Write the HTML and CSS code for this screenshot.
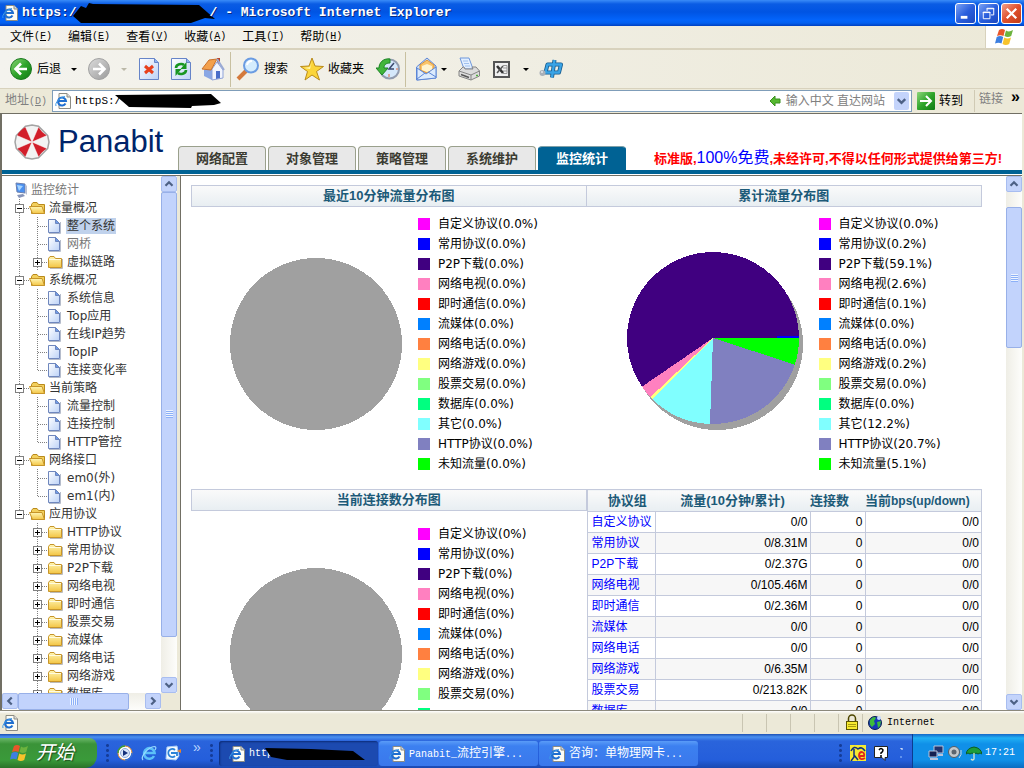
FILE: index.html
```html
<!DOCTYPE html>
<html lang="zh-CN">
<head>
<meta charset="utf-8">
<title>Panabit 监控统计</title>
<link rel="stylesheet" href="styles.css">
</head>
<body>
<svg class="defs" aria-hidden="true">
  <defs>
    <linearGradient id="gGreen" x1="0" y1="0" x2="1" y2="1"><stop offset="0" stop-color="#8fd67a"/><stop offset=".5" stop-color="#2fa52b"/><stop offset="1" stop-color="#0f7a14"/></linearGradient>
    <linearGradient id="gGray" x1="0" y1="0" x2="1" y2="1"><stop offset="0" stop-color="#dcdcdc"/><stop offset="1" stop-color="#9a9a9a"/></linearGradient>
    <linearGradient id="gPage" x1="0" y1="0" x2="1" y2="1"><stop offset="0" stop-color="#fff"/><stop offset="1" stop-color="#bcd2f7"/></linearGradient>
    <linearGradient id="gFolder" x1="0" y1="0" x2="0" y2="1"><stop offset="0" stop-color="#fff6b4"/><stop offset="1" stop-color="#f3c544"/></linearGradient>
    <symbol id="ie" viewBox="0 0 16 16"><path d="M4 .5h8l3.500 3.500v11.500H4z" fill="#fdfdf6" stroke="#8c8c84"/><path d="M12 .5V4h3.500" fill="#ddd" stroke="#8c8c84"/><path d="M10.500 10.500a4 4 0 1 1 .5-2.500H4" fill="none" stroke="#1f6fd0" stroke-width="2"/><path d="M1 13C-.5 10 5 4 10 3.500" fill="none" stroke="#3f9be8"/></symbol>
    <symbol id="bigE" viewBox="0 0 16 16"><path d="M13 11a5.300 5.300 0 1 1 .6-3H4" fill="none" stroke="#5cc0f8" stroke-width="2.600"/><path d="M2 15C-1 12 7 2 13.500 1.500c2 0 1.500 2 .5 3.500" fill="none" stroke="#9adcff" stroke-width="1.200"/></symbol>
    <symbol id="flag" viewBox="0 0 20 18"><path d="M4 2q3-2 6 0L8.500 8q-3-1.500-6.500 0z" fill="#e8562a"/><path d="M11 2.500q3 2 7-.5l-1.800 6q-3.500 2-6.700 0z" fill="#6cb33e"/><path d="M1.700 9q3.500-2 6.500 0l-1.700 6.500Q3.500 14 0 15.500z" fill="#3d7fe0"/><path d="M9.200 9.500q3.300 2 6.800 0L14.200 16q-3.500 2-6.700 0z" fill="#f7c32b"/></symbol>
    <symbol id="caret" viewBox="0 0 10 10"><path d="M2 4h6L5 7z"/></symbol>
    <symbol id="up" viewBox="0 0 16 16"><path d="M4 10l4-4 4 4" fill="none" stroke="#4d6185" stroke-width="2.500"/></symbol>
    <symbol id="down" viewBox="0 0 16 16"><path d="M4 6l4 4 4-4" fill="none" stroke="#4d6185" stroke-width="2.500"/></symbol>
    <symbol id="left" viewBox="0 0 16 16"><path d="M10 4L6 8l4 4" fill="none" stroke="#4d6185" stroke-width="2.500"/></symbol>
    <symbol id="right" viewBox="0 0 16 16"><path d="M6 4l4 4-4 4" fill="none" stroke="#4d6185" stroke-width="2.500"/></symbol>
    <symbol id="plus" viewBox="0 0 18 18"><path d="M8.500 0v18M9 9.500h9" stroke="#808080" stroke-dasharray="1 1"/><rect x="4.500" y="5.500" width="8" height="8" fill="#fff" stroke="#808080"/><path d="M6 9.500h5M8.500 7v5" stroke="#000"/></symbol>
    <symbol id="minus" viewBox="0 0 18 18"><path d="M8.500 0v18M9 9.500h9" stroke="#808080" stroke-dasharray="1 1"/><rect x="4.500" y="5.500" width="8" height="8" fill="#fff" stroke="#808080"/><path d="M6 9.500h5" stroke="#000"/></symbol>
    <symbol id="minusEnd" viewBox="0 0 18 18"><path d="M8.500 0v6M9 9.500h9" stroke="#808080" stroke-dasharray="1 1"/><rect x="4.500" y="5.500" width="8" height="8" fill="#fff" stroke="#808080"/><path d="M6 9.500h5" stroke="#000"/></symbol>
    <symbol id="line" viewBox="0 0 18 18"><path d="M8.500 0v18" stroke="#808080" stroke-dasharray="1 1"/></symbol>
    <symbol id="folder" viewBox="0 0 18 18"><path d="M3 15.500h12.500V6" fill="none" stroke="#bbb"/><path d="M1.500 14.500v-9l1.500-2h4l1.500 2h6v9z" fill="url(#gFolder)" stroke="#c7952a"/><path d="M2 6.500h12" stroke="#fffbe0"/></symbol>
    <symbol id="open" viewBox="0 0 18 18"><path d="M2.500 14.500v-9l1.500-2h4l1.500 2h6v9z" fill="#f2cf5c" stroke="#b98a1c"/><path d="M.5 7.500h12.500l2.500 7H3.500z" fill="url(#gFolder)" stroke="#c7952a"/></symbol>
    <symbol id="page" viewBox="0 0 18 18"><path d="M2 16.500h11.500V5" fill="none" stroke="#b5bccb"/><path d="M1.500 2.500h7l4 4v9h-11z" fill="url(#gPage)" stroke="#6f87bd"/><path d="M8.500 2.500v4h4z" fill="#6f9be8" stroke="#6f87bd"/></symbol>
    <symbol id="leaf" viewBox="0 0 54 18"><path d="M8.500 0v18M26.500 0v18M27 9.500h9" stroke="#808080" stroke-dasharray="1 1"/><use href="#page" x="36" width="18" height="18"/></symbol>
    <symbol id="leafEnd" viewBox="0 0 54 18"><path d="M8.500 0v18M26.500 0v9M27 9.500h9" stroke="#808080" stroke-dasharray="1 1"/><use href="#page" x="36" width="18" height="18"/></symbol>
    <symbol id="gray" viewBox="0 0 180 180"><circle cx="90" cy="92" r="86" fill="#a0a0a0"/></symbol>
  </defs>
</svg>

<header class="titlebar">
  <svg class="i16"><use href="#ie"/></svg>
  <h1>https:/<svg class="redact-title" viewBox="0 0 143 20"><path d="M0 13L8 3l5 2 3-5 4 1 106 1 16 14-10-1-14 5H8z"/></svg>/ - Microsoft Internet Explorer</h1>
  <div class="winbtns">
    <button aria-label="最小化"><svg viewBox="0 0 20 20"><path d="M5 14h7" stroke="#fff" stroke-width="3"/></svg></button>
    <button aria-label="还原"><svg viewBox="0 0 20 20" fill="none" stroke="#fff"><path d="M8.500 7.500v-3h7v7h-3M8 5h8M4.500 8.500h7v7h-7zM4 9h8"/></svg></button>
    <button class="close" aria-label="关闭"><svg viewBox="0 0 20 20"><path d="M5 5l10 10M15 5L5 15" stroke="#fff" stroke-width="2.400"/></svg></button>
  </div>
</header>

<nav class="menubar">
  <button>文件<span class="m">(<u>F</u>)</span></button>
  <button>编辑<span class="m">(<u>E</u>)</span></button>
  <button>查看<span class="m">(<u>V</u>)</span></button>
  <button>收藏<span class="m">(<u>A</u>)</span></button>
  <button>工具<span class="m">(<u>T</u>)</span></button>
  <button>帮助<span class="m">(<u>H</u>)</span></button>
  <div class="throbber"><svg viewBox="0 0 20 18"><use href="#flag"/></svg></div>
</nav>

<div class="toolbar">
  <button><svg class="i24" viewBox="0 0 24 24"><circle cx="12" cy="12" r="10.500" fill="url(#gGreen)" stroke="#1c7a20"/><path d="M18 12H7M12 6.500L6.500 12l5.500 5.500" fill="none" stroke="#fff" stroke-width="2.600"/></svg>后退</button>
  <button aria-label="后退列表"><svg class="i10"><use href="#caret"/></svg></button>
  <button aria-label="前进"><svg class="i24" viewBox="0 0 24 24"><circle cx="12" cy="12" r="10.500" fill="url(#gGray)" stroke="#a2a2a2"/><path d="M6 12h11M12 6.500l5.500 5.500-5.500 5.500" fill="none" stroke="#fff" stroke-width="2.600"/></svg></button>
  <button class="off" aria-label="前进列表"><svg class="i10"><use href="#caret"/></svg></button>
  <button aria-label="停止"><svg class="i24" viewBox="0 0 24 24"><path d="M2.500 1.500h15l4 4v17h-19z" fill="url(#gPage)" stroke="#6684c8"/><path d="M17.500 1.500v4h4" fill="#8fb2f0" stroke="#6684c8"/><path d="M8 9l8 7M16 9l-8 7" stroke="#e8401c" stroke-width="3"/></svg></button>
  <button aria-label="刷新"><svg class="i24" viewBox="0 0 24 24"><path d="M2.500 1.500h15l4 4v17h-19z" fill="url(#gPage)" stroke="#6684c8"/><path d="M17.500 1.500v4h4" fill="#8fb2f0" stroke="#6684c8"/><path d="M7 11c0-4 6-5 8-3M17 13c0 4-6 5-8 3" fill="none" stroke="#189622" stroke-width="2.600"/><path d="M17.500 5v7h-6zM6.500 19v-7h6z" fill="#189622"/></svg></button>
  <button aria-label="主页"><svg class="i24" viewBox="0 0 24 24"><path d="M16 1h3v6h-3z" fill="#b8452a"/><path d="M3 13l8-3v13l-8-4z" fill="#8aa7e4"/><path d="M11 12l5-7 6 8v8l-11 2z" fill="#f2f5fd" stroke="#8fa3d8"/><path d="M15 14h4v7l-4 1z" fill="#4a6ec9"/><path d="M1 12L8 3l8-1-6 11z" fill="#f3a04c" stroke="#c9702a"/><path d="M16 2l7 11" stroke="#9aaad4" stroke-width="2"/></svg></button>
  <i class="sep"></i>
  <button><svg class="i24" viewBox="0 0 24 24"><path d="M10 14l-8 8" stroke="#d47a3c" stroke-width="4"/><circle cx="15" cy="8.500" r="7" fill="#d4ecfd" stroke="#6b9ce2" stroke-width="2"/><path d="M11 8q1-4 5-4" stroke="#fff" stroke-width="2" fill="none"/></svg>搜索</button>
  <button class="pad"><svg class="i24" viewBox="0 0 24 24"><path d="M12 1l3 8 8.500.5-7 5 3 8.500-7.500-5L5 23l2.500-8.500L.5 9.500 9 9z" fill="#fbd53a" stroke="#b98a1a"/><path d="M12 4l-2 6-6 1 6 1z" fill="#fff6b8"/></svg>收藏夹</button>
  <button aria-label="历史"><svg class="i24" viewBox="0 0 24 24"><circle cx="13.500" cy="12" r="9.500" fill="#d5e8fb" stroke="#929caf" stroke-width="2"/><path d="M18 6l-5 6h5" fill="none" stroke="#3c4a70" stroke-width="1.500"/><path d="M13 17v3M20 12h2" stroke="#e46b3a"/><path d="M14 2C7 1 3 6 3 11H0l6 7 6-7H8c0-4 3-5 6-5z" fill="#41b53b" stroke="#1d8424"/></svg></button>
  <i class="sep"></i>
  <span class="split">
    <button aria-label="邮件"><svg class="i24" viewBox="0 0 24 24"><path d="M1.500 10L12 1l9 8v12l-19.500 2z" fill="#cfe3fc" stroke="#5d86d6"/><path d="M5 8l7-5 7 5v5l-7 3-7-3z" fill="#fbc56b" stroke="#d8923a"/><path d="M7 9l5-2 5 2v4l-5 2-5-2z" fill="#fff3d0"/><path d="M2 11l9 6 10-7v11L2 23z" fill="#dcebfd" stroke="#5d86d6"/><path d="M2 22l8-6M21 20l-8-5" stroke="#5d86d6"/></svg></button>
    <button aria-label="邮件列表"><svg class="i10"><use href="#caret"/></svg></button>
  </span>
  <button aria-label="打印"><svg class="i24" viewBox="0 0 24 24"><path d="M3 1h9l4 11H7z" fill="#e2efff" stroke="#6f98dc"/><path d="M6 4h5M7 6.500h5M8 9h5" stroke="#9fc0ee"/><path d="M2 14l4-4h1l1 2h8l-1-2h4l3.500 4v5L14 23 2 19z" fill="#dcdcdc" stroke="#858585"/><path d="M2 14l12 4 8.500-4M14 18v5" fill="none" stroke="#858585"/><path d="M4 17.500l8 3" stroke="#555" stroke-width="1.500"/><path d="M19 18.500h2" stroke="#4fae3c" stroke-width="1.500"/></svg></button>
  <button aria-label="Excel"><svg class="i24" viewBox="0 0 24 24"><rect x="5" y="5" width="15" height="15" fill="#f0f0f0" stroke="#555" stroke-width="2"/><path d="M14 8.500h4v8h-4M14 11h4M14 14h4" fill="none" stroke="#999"/><path d="M8 9l6 7" stroke="#333" stroke-width="2.600"/><path d="M14 9l-6 7" stroke="#555" stroke-width="1.500"/></svg></button>
  <button aria-label="Excel列表"><svg class="i10"><use href="#caret"/></svg></button>
  <button aria-label="中文上网"><svg class="i24" viewBox="0 0 24 24"><g fill="none" stroke-linejoin="round"><path d="M8.500 7.500H22L20 15.500H6.500zM15.500 3L13 20.500" stroke="#14598c" stroke-width="4"/><path d="M8.500 7.500H22L20 15.500H6.500zM15.500 3L13 20.500" stroke="#3aa4e6" stroke-width="2.400"/></g><circle cx="3.500" cy="16" r="3" fill="#a9b0b8"/><circle cx="3" cy="15" r="1" fill="#e4e8ec"/></svg></button>
</div>

<form class="addressbar">
  <label for="addr">地址<span class="m">(<u>D</u>)</span></label>
  <div class="field">
    <svg class="i16"><use href="#ie"/></svg>
    <output id="addr">httpS:/<svg class="redact-addr" viewBox="0 0 106 14"><path d="M0 1l96-1 10 9-7 2-22 1-1 2-62-1z"/></svg></output>
    <span class="hint"><svg class="i12" viewBox="0 0 12 12"><path d="M6 1v3h5v4H6v3L1 6z" fill="#56b930" stroke="#3a8f1e"/></svg>输入中文 直达网站</span>
    <button type="button" class="drop" aria-label="展开地址"><svg><use href="#down"/></svg></button>
  </div>
  <button type="button" class="go"><svg class="i18" viewBox="0 0 18 18"><rect width="18" height="18" rx="1" fill="url(#gGreen)"/><path d="M3 9h11M9 4l5 5-5 5" fill="none" stroke="#fff" stroke-width="2"/></svg>转到</button>
  <div class="links"><span>链接</span><b>»</b></div>
</form>

<main class="frame">
  <header class="banner">
    <a class="brand" href="#"><svg viewBox="0 0 36 36"><path d="M11.500 2.300L18 1l6.500 1.300 4.600 4.600 4.600 4.600L35 18l-1.300 6.500-9.200 9.200L18 35l-6.500-1.300-9.200-9.200L1 18l1.300-6.500z" fill="#f3f3f3" stroke="#a4a4a4" stroke-width="1.500"/><path d="M18 18L11.500 3Q6 6 3 11.500zM18 18L24.500 3Q27 8 33 11.500zM18 18l15 6.500q-5.500 3-8.500 8.500zM18 18L3 24.500Q8 28 11.500 33z" fill="#d21f2b"/><path d="M11.500 3L24.500 33M24.500 3L11.500 33M3 11.500l30 13M33 11.500l-30 13" stroke="#fff" stroke-width=".5"/></svg>Panabit</a>
    <nav class="tabs"><a href="#">网络配置</a><a href="#">对象管理</a><a href="#">策略管理</a><a href="#">系统维护</a><a href="#" class="on">监控统计</a></nav>
    <p class="notice">标准版,<em>100%免费</em>,未经许可,不得以任何形式提供给第三方!</p>
  </header>

  <div class="panes">
    <aside class="side">
      <div class="side-top">
        <ul class="tree">
          <li><svg class="c" viewBox="0 0 18 18"><path d="M5 2l9 1v9l-8-1z" fill="#4a90f0" stroke="#6b7fae"/><path d="M6 4l6 1-4 5z" fill="#a6d4ff"/><path d="M14 3l2 2v9l-2-2z" fill="#b9bfd2"/><path d="M6 14l6-1 2 2-6 2z" fill="#8794b8"/></svg><a href="#" class="dim">监控统计</a></li>
          <li><button aria-label="收起"><svg class="c"><use href="#minus"/></svg></button><svg class="c"><use href="#open"/></svg><a href="#">流量概况</a></li>
          <li><svg class="l"><use href="#leaf"/></svg><a href="#" class="sel">整个系统</a></li>
          <li><svg class="l"><use href="#leaf"/></svg><a href="#" class="dim">网桥</a></li>
          <li><svg class="c"><use href="#line"/></svg><button aria-label="展开"><svg class="c"><use href="#plus"/></svg></button><svg class="c"><use href="#folder"/></svg><a href="#">虚拟链路</a></li>
          <li><button aria-label="收起"><svg class="c"><use href="#minus"/></svg></button><svg class="c"><use href="#open"/></svg><a href="#">系统概况</a></li>
          <li><svg class="l"><use href="#leaf"/></svg><a href="#">系统信息</a></li>
          <li><svg class="l"><use href="#leaf"/></svg><a href="#">Top应用</a></li>
          <li><svg class="l"><use href="#leaf"/></svg><a href="#">在线IP趋势</a></li>
          <li><svg class="l"><use href="#leaf"/></svg><a href="#">TopIP</a></li>
          <li><svg class="l"><use href="#leafEnd"/></svg><a href="#">连接变化率</a></li>
          <li><button aria-label="收起"><svg class="c"><use href="#minus"/></svg></button><svg class="c"><use href="#open"/></svg><a href="#">当前策略</a></li>
          <li><svg class="l"><use href="#leaf"/></svg><a href="#">流量控制</a></li>
          <li><svg class="l"><use href="#leaf"/></svg><a href="#">连接控制</a></li>
          <li><svg class="l"><use href="#leafEnd"/></svg><a href="#">HTTP管控</a></li>
          <li><button aria-label="收起"><svg class="c"><use href="#minus"/></svg></button><svg class="c"><use href="#open"/></svg><a href="#">网络接口</a></li>
          <li><svg class="l"><use href="#leaf"/></svg><a href="#">em0(外)</a></li>
          <li><svg class="l"><use href="#leafEnd"/></svg><a href="#">em1(内)</a></li>
          <li><button aria-label="收起"><svg class="c"><use href="#minusEnd"/></svg></button><svg class="c"><use href="#open"/></svg><a href="#">应用协议</a></li>
          <li class="deep"><button aria-label="展开"><svg class="c"><use href="#plus"/></svg></button><svg class="c"><use href="#folder"/></svg><a href="#">HTTP协议</a></li>
          <li class="deep"><button aria-label="展开"><svg class="c"><use href="#plus"/></svg></button><svg class="c"><use href="#folder"/></svg><a href="#">常用协议</a></li>
          <li class="deep"><button aria-label="展开"><svg class="c"><use href="#plus"/></svg></button><svg class="c"><use href="#folder"/></svg><a href="#">P2P下载</a></li>
          <li class="deep"><button aria-label="展开"><svg class="c"><use href="#plus"/></svg></button><svg class="c"><use href="#folder"/></svg><a href="#">网络电视</a></li>
          <li class="deep"><button aria-label="展开"><svg class="c"><use href="#plus"/></svg></button><svg class="c"><use href="#folder"/></svg><a href="#">即时通信</a></li>
          <li class="deep"><button aria-label="展开"><svg class="c"><use href="#plus"/></svg></button><svg class="c"><use href="#folder"/></svg><a href="#">股票交易</a></li>
          <li class="deep"><button aria-label="展开"><svg class="c"><use href="#plus"/></svg></button><svg class="c"><use href="#folder"/></svg><a href="#">流媒体</a></li>
          <li class="deep"><button aria-label="展开"><svg class="c"><use href="#plus"/></svg></button><svg class="c"><use href="#folder"/></svg><a href="#">网络电话</a></li>
          <li class="deep"><button aria-label="展开"><svg class="c"><use href="#plus"/></svg></button><svg class="c"><use href="#folder"/></svg><a href="#">网络游戏</a></li>
          <li class="deep"><button aria-label="展开"><svg class="c"><use href="#plus"/></svg></button><svg class="c"><use href="#folder"/></svg><a href="#">数据库</a></li>
        </ul>
        <div class="vscroll"><button aria-label="向上"><svg><use href="#up"/></svg></button><span class="thumb side-thumb"><i></i></span><span class="rest"></span><button aria-label="向下"><svg><use href="#down"/></svg></button></div>
      </div>
      <div class="side-bottom">
        <div class="hscroll"><button aria-label="向左"><svg><use href="#left"/></svg></button><span class="thumb"><i></i></span><span class="rest"></span><button aria-label="向右"><svg><use href="#right"/></svg></button></div>
      </div>
    </aside>

    <section class="content">
      <div class="report">
        <section class="card">
          <h2>最近10分钟流量分布图</h2>
          <div class="chart"><svg class="pie" shape-rendering="crispEdges"><use href="#gray"/></svg>
            <ul class="legend"><li class="k1">自定义协议(0.0%)</li><li class="k2">常用协议(0.0%)</li><li class="k3">P2P下载(0.0%)</li><li class="k4">网络电视(0.0%)</li><li class="k5">即时通信(0.0%)</li><li class="k6">流媒体(0.0%)</li><li class="k7">网络电话(0.0%)</li><li class="k8">网络游戏(0.0%)</li><li class="k9">股票交易(0.0%)</li><li class="k10">数据库(0.0%)</li><li class="k11">其它(0.0%)</li><li class="k12">HTTP协议(0.0%)</li><li class="k13">未知流量(0.0%)</li></ul>
          </div>
        </section>
        <section class="card second">
          <h2>累计流量分布图</h2>
          <div class="chart"><svg class="pie" viewBox="0 0 180 180" shape-rendering="crispEdges"><circle cx="90" cy="92" r="86" fill="#a0a0a0"/><path d="M86 86H172A86 86 0 1 0 15 134.600z" fill="#400080"/><path d="M86 86L15 134.600A86 86 0 0 0 23.900 145.500z" fill="#ff80c0"/><path d="M86 86L25.200 146.800A86 86 0 0 0 83 172z" fill="#80ffff"/><path d="M86 86L23.500 145A86 86 0 0 0 25.400 147z" fill="#ffff80"/><path d="M86 86L83 172A86 86 0 0 0 167.800 112.600z" fill="#8080c0"/><path d="M86 86L167.800 112.600A86 86 0 0 0 172 86z" fill="#0f0"/><path d="M150 85h22" stroke="#00f" stroke-width="2"/></svg>
            <ul class="legend"><li class="k1">自定义协议(0.0%)</li><li class="k2">常用协议(0.2%)</li><li class="k3">P2P下载(59.1%)</li><li class="k4">网络电视(2.6%)</li><li class="k5">即时通信(0.1%)</li><li class="k6">流媒体(0.0%)</li><li class="k7">网络电话(0.0%)</li><li class="k8">网络游戏(0.2%)</li><li class="k9">股票交易(0.0%)</li><li class="k10">数据库(0.0%)</li><li class="k11">其它(12.2%)</li><li class="k12">HTTP协议(20.7%)</li><li class="k13">未知流量(5.1%)</li></ul>
          </div>
        </section>
        <section class="card low">
          <h2>当前连接数分布图</h2>
          <div class="chart"><svg class="pie" shape-rendering="crispEdges"><use href="#gray"/></svg>
            <ul class="legend"><li class="k1">自定义协议(0%)</li><li class="k2">常用协议(0%)</li><li class="k3">P2P下载(0%)</li><li class="k4">网络电视(0%)</li><li class="k5">即时通信(0%)</li><li class="k6">流媒体(0%)</li><li class="k7">网络电话(0%)</li><li class="k8">网络游戏(0%)</li><li class="k9">股票交易(0%)</li><li class="k10"></li></ul>
          </div>
        </section>
        <table class="stats">
          <colgroup><col class="c1"><col class="c2"><col class="c3"><col class="c4"></colgroup>
          <thead><tr><th>协议组</th><th>流量(10分钟/累计)</th><th>连接数</th><th>当前<small>bps(up/down)</small></th></tr></thead>
          <tbody>
            <tr><td><a href="#">自定义协议</a></td><td>0/0</td><td>0</td><td>0/0</td></tr>
            <tr><td><a href="#">常用协议</a></td><td>0/8.31M</td><td>0</td><td>0/0</td></tr>
            <tr><td><a href="#">P2P下载</a></td><td>0/2.37G</td><td>0</td><td>0/0</td></tr>
            <tr><td><a href="#">网络电视</a></td><td>0/105.46M</td><td>0</td><td>0/0</td></tr>
            <tr><td><a href="#">即时通信</a></td><td>0/2.36M</td><td>0</td><td>0/0</td></tr>
            <tr><td><a href="#">流媒体</a></td><td>0/0</td><td>0</td><td>0/0</td></tr>
            <tr><td><a href="#">网络电话</a></td><td>0/0</td><td>0</td><td>0/0</td></tr>
            <tr><td><a href="#">网络游戏</a></td><td>0/6.35M</td><td>0</td><td>0/0</td></tr>
            <tr><td><a href="#">股票交易</a></td><td>0/213.82K</td><td>0</td><td>0/0</td></tr>
            <tr><td><a href="#">数据库</a></td><td>0/0</td><td>0</td><td>0/0</td></tr>
          </tbody>
        </table>
      </div>
      <div class="vscroll"><button aria-label="向上"><svg><use href="#up"/></svg></button><span class="lead"></span><span class="thumb main-thumb"><i></i></span><span class="rest"></span><button aria-label="向下"><svg><use href="#down"/></svg></button></div>
    </section>
  </div>
</main>

<footer class="status">
  <svg class="i16"><use href="#ie"/></svg>
  <span class="grow"></span><span class="cell"></span><span class="cell"></span><span class="cell"></span><span class="cell"></span>
  <span class="cell"><svg class="i16" viewBox="0 0 16 16"><path d="M4.500 8V4.500a3.500 3.500 0 0 1 7 0V8" fill="none" stroke="#4d4600" stroke-width="1.500"/><rect x="2.500" y="7.500" width="11" height="8" fill="#f7ea2e" stroke="#5b5400"/><path d="M4 10.500h8M4 12.500h8" stroke="#a89b10"/></svg></span>
  <span class="zone m"><svg class="i16" viewBox="0 0 16 16"><circle cx="8" cy="8" r="6.500" fill="#1638b8" stroke="#0a1c50"/><path d="M3 5q4-5 6-2l-2 3 1 3-3 3q-3-2-2-7M10 7l4-1-1 5-2 2z" fill="#3dbb3a"/><circle cx="12" cy="3" r="2" fill="#c4d9ff"/></svg>Internet</span>
</footer>

<nav class="taskbar">
  <button class="start"><svg viewBox="0 0 20 18"><use href="#flag"/></svg>开始</button>
  <div class="quick">
    <i class="grip"></i>
    <a href="#" aria-label="媒体播放器"><svg class="i16" viewBox="0 0 16 16"><circle cx="8" cy="8" r="7" fill="#fff" stroke="#e58f2c"/><path d="M8 1a7 7 0 0 0-7 7" stroke="#3a9c3a" fill="none" stroke-width="1.500"/><path d="M8 15a7 7 0 0 0 7-7" stroke="#2f6fd8" fill="none" stroke-width="1.500"/><circle cx="8" cy="8" r="4.500" fill="#d9e6fb" stroke="#8fa9d8"/><path d="M6 5l5 3-5 3z" fill="#14307a"/></svg></a>
    <a href="#" aria-label="Internet Explorer"><svg class="i16"><use href="#bigE"/></svg></a>
    <a href="#" aria-label="Outlook"><svg class="i16" viewBox="0 0 16 16"><path d="M2 2l10-1 2 10-3 4-10-1z" fill="#f5faff" stroke="#a9cdf5"/><path d="M10 5a4 4 0 1 0 0 6M6 8h6v3" fill="none" stroke="#2a83d8" stroke-width="1.800"/><path d="M12 6l4-2v4z" fill="#e8822a"/></svg></a>
    <span class="more">»</span>
    <i class="grip"></i>
  </div>
  <button class="task active"><svg class="i16"><use href="#ie"/></svg><span class="m">https:</span><svg class="redact-task" viewBox="0 0 100 12"><path d="M0 0l46 1 42 2 12 9H22L6 9z"/></svg></button>
  <button class="task"><svg class="i16"><use href="#ie"/></svg><span><span class="m">Panabit_</span>流控引擎<span class="m">...</span></span></button>
  <button class="task"><svg class="i16"><use href="#ie"/></svg><span>咨询：单物理网卡<span class="m">...</span></span></button>
  <div class="lang">
    <i class="grip"></i>
    <svg class="i16" viewBox="0 0 16 16"><rect width="16" height="16" fill="#f4ea32"/><path d="M1 6q3-6 7-2 4-3 7 2M4 4v8l-3 4M4 10l4 5" fill="none" stroke="#10307c" stroke-width="1.500"/><path d="M15 13q-5 3-6-2 0-4 3-4 3 1 2 4h-4" fill="none" stroke="#e2261c" stroke-width="1.800"/></svg>
    <svg class="i16" viewBox="0 0 16 16"><path d="M1.500 1.500h13v11H12v3l-3-3H1.500z" fill="#fff" stroke="#222"/><path d="M6 5q2-3 4 0 0 2-2 3v1M8 10v2" fill="none" stroke="#000" stroke-width="1.500"/></svg>
    <svg class="i10" viewBox="0 0 10 10"><path d="M4 0h2v2" stroke="#fff" fill="none"/><path d="M4 9h2" stroke="#9cc4ff"/></svg>
  </div>
  <div class="tray">
    <svg class="i16" viewBox="0 0 16 16"><path d="M6 1h9v7H6z" fill="#22336c" stroke="#b8c4dc"/><path d="M1 6h8v6H1z" fill="#142050" stroke="#b8c4dc"/><path d="M2 14h8M10 10h5" stroke="#b8c4dc" stroke-width="2"/></svg>
    <svg class="i16" viewBox="0 0 16 16"><circle cx="7" cy="7" r="5.500" fill="#c5c9cc" stroke="#555d66"/><circle cx="7" cy="7" r="2.500" fill="#5d656e"/><path d="M12 13q3-3 2-8" fill="none" stroke="#cdd9e8"/></svg>
    <svg class="i16" viewBox="0 0 16 16"><path d="M0 9q1-6 8-7 7 1 8 7-2-2-4 0-2-2-4 0-2-2-4 0-2-2-4 0z" fill="#1d9d3a" stroke="#0c5c20"/><path d="M8 8v6q-1 2-3 0" fill="none" stroke="#d8e8d0" stroke-width="1.300"/></svg>
    <time class="m">17:21</time>
  </div>
</nav>
</body>
</html>
```
FILE: styles.css
```css
* { box-sizing: border-box; }
html, body { height: 100%; }
body {
  margin: 0;
  display: flex;
  flex-direction: column;
  overflow: hidden;
  background: #ece9d8;
  color: #000;
  font: 12px/18px "Liberation Sans", "Noto Sans CJK SC", sans-serif;
}
h1, h2, p, ul { margin: 0; padding: 0; }
ul { list-style: none; }
a { text-decoration: none; color: inherit; }
button { margin: 0; padding: 0; border: 0; background: none; font: inherit; color: inherit; display: flex; align-items: center; }
svg { display: block; flex: none; }
.defs { position: absolute; width: 0; height: 0; }
.m { font-family: "Liberation Mono", "Noto Sans CJK SC", monospace; font-size: 10px; }
.i10 { width: 10px; height: 10px; }
.i12 { width: 12px; height: 12px; }
.i16 { width: 16px; height: 16px; }
.i18 { width: 18px; height: 18px; }
.i24 { width: 24px; height: 24px; }

/* title bar */
.titlebar {
  flex: none;
  height: 26px;
  padding: 0 2px;
  display: flex;
  align-items: center;
  gap: 4px;
  background: linear-gradient(#3a8cf8 0, #0a5ce4 4px, #0054e3 12px, #0364fb 20px, #0360f0 23px, #0040c0 100%);
}
.titlebar h1 {
  flex: 1;
  display: flex;
  align-items: center;
  white-space: pre;
  color: #fff;
  font: bold 13px/18px "Liberation Mono", monospace;
  text-shadow: 1px 1px #0a2a80;
}
.redact-title { width: 143px; height: 20px; margin: 0 -6px 0 -4px; }
.winbtns { display: flex; gap: 2px; }
.winbtns button { width: 21px; height: 21px; border: 1px solid #fff; border-radius: 3px; background: linear-gradient(135deg, #7ba2f4, #2a5fdd 50%, #1b48c0); }
.winbtns .close { background: linear-gradient(135deg, #f0a08a, #e0502c 50%, #c03c18); }
.winbtns svg { width: 19px; height: 19px; }

/* menu and toolbar */
.menubar {
  flex: none;
  height: 24px;
  padding-left: 10px;
  display: flex;
  gap: 16px;
  background: linear-gradient(90deg, #f4f3ee, #ece9d8);
  border-bottom: 2px solid #d8d2bd;
}
.throbber { margin-left: auto; width: 39px; background: #fff; border-left: 1px solid #d8d2bd; display: flex; align-items: center; justify-content: center; }
.throbber svg { width: 20px; height: 18px; }
.toolbar {
  flex: none;
  height: 39px;
  padding-left: 9px;
  display: flex;
  align-items: center;
  gap: 8px;
  background: linear-gradient(90deg, #f4f3ee, #ece9d8);
  border-bottom: 1px solid #d8d2bd;
}
.toolbar button { gap: 4px; }
.toolbar .pad { padding: 0 4px; }
.toolbar .off { fill: #bbb8a8; }
.split { display: flex; padding-left: 4px; }
.sep { width: 1px; height: 35px; margin: 0 -3px; background: #c8c0a0; }

/* address bar */
.addressbar { flex: none; height: 24px; display: flex; align-items: center; padding-left: 5px; color: #808080; }
.addressbar label { width: 47px; }
.field { flex: 1; height: 22px; display: flex; align-items: center; gap: 4px; padding: 0 2px; background: #fff; border: 1px solid #7f9db9; color: #000; }
.field output { flex: 1; display: flex; align-items: center; font: 11px/18px "Liberation Mono", monospace; }
.redact-addr { width: 106px; height: 14px; margin-left: -6px; }
.hint { display: flex; align-items: center; gap: 5px; color: #808080; margin-right: 5px; }
.drop { width: 15px; height: 18px; background: #c4d4fb; border-radius: 2px; }
.drop svg { width: 15px; height: 16px; }
.go { gap: 4px; padding: 0 11px 0 5px; color: #000; }
.links { display: flex; gap: 8px; height: 22px; padding: 0 4px; border-left: 1px solid #d0cab4; }
.links b { color: #000; font-size: 16px; line-height: 14px; }

/* page frame */
.frame { flex: 1; min-height: 0; display: flex; flex-direction: column; margin-right: 2px; border: solid #716f64; border-width: 1px 0 0 2px; background: #fff; }
.banner { flex: none; height: 60px; display: flex; align-items: flex-end; border-bottom: 4px solid #006294; }
.brand { width: 176px; align-self: stretch; display: flex; align-items: center; gap: 8px; padding-left: 12px; color: #00246b; font: 31px/36px "Liberation Sans", sans-serif; }
.brand svg { width: 36px; height: 36px; }
.tabs { display: flex; gap: 2px; }
.tabs a { width: 88px; height: 24px; line-height: 24px; text-align: center; font-weight: bold; font-size: 13px; color: #3c3c32; background: #e8e8e8; border: 1px solid #9aa08c; border-bottom: 0; border-radius: 4px 4px 0 0; }
.tabs .on { color: #fff; background: #006294; border-color: #7fa0a8 #006294; }
.notice { margin-left: auto; padding-right: 20px; color: #f00; font-weight: bold; font-size: 13px; line-height: 22px; white-space: nowrap; }
.notice em { color: #00f; font-style: normal; font-weight: normal; font-size: 16px; }
.panes { flex: 1; min-height: 0; display: flex; margin-top: 1px; border-top: 1px solid #716f64; }

/* tree pane */
.side { flex: none; width: 179px; display: flex; flex-direction: column; border-right: 1px solid #716f64; background: #ece9d8; padding-right: 3px; }
.side-top { flex: 1; min-height: 0; display: flex; background: #fff; }
.side-bottom { flex: none; height: 17px; padding-right: 16px; }
.tree { flex: 1; min-width: 0; overflow: hidden; padding: 5px 0 0 9px; color: #333; font-family: "DejaVu Sans", "Noto Sans CJK SC", sans-serif; }
.tree li { height: 18px; display: flex; align-items: center; white-space: nowrap; }
.tree .deep { padding-left: 18px; }
.tree a { line-height: 16px; padding: 0 1px; margin-left: 1px; }
.tree .dim { color: #777; }
.tree .sel { background: #c0d2ec; }
.c { width: 18px; height: 18px; }
.l { width: 54px; height: 18px; }

/* scroll bars */
.vscroll { flex: none; width: 16px; display: flex; flex-direction: column; background: linear-gradient(90deg, #efeee6, #fdfdfb); }
.hscroll { height: 17px; display: flex; background: linear-gradient(#efeee6, #fdfdfb); }
.vscroll button, .hscroll button { flex: none; width: 16px; height: 16px; background: #c4d4fb; border: 1px solid #a8bdf0; border-radius: 2px; }
.vscroll button svg, .hscroll button svg { width: 14px; height: 14px; }
.thumb { display: flex; align-items: center; justify-content: center; background: #c2d3fc; border: 1px solid #98b0e8; border-radius: 2px; }
.vscroll .thumb i { width: 7px; height: 8px; background: repeating-linear-gradient(#eef4fe 0 1px, #8cb0f8 1px 2px); }
.hscroll .thumb { width: 111px; }
.hscroll .thumb i { width: 8px; height: 7px; background: repeating-linear-gradient(90deg, #eef4fe 0 1px, #8cb0f8 1px 2px); }
.rest { flex: 1; }
.lead { height: 15px; }
.side-thumb { flex: 0 0 86%; }
.main-thumb { flex: 0 0 141px; }

/* report */
.content { flex: 1; min-width: 0; display: flex; }
.report { flex: 1; min-width: 0; overflow: hidden; padding: 9px 24px 0 10px; display: grid; grid-template-columns: 1fr 1fr; grid-template-rows: 304px auto; align-items: start; }
.card h2, .stats th { font-weight: bold; font-size: 13px; color: #1c5a78; background: linear-gradient(#fafafa, #e8eef2); }
.card h2 { height: 22px; line-height: 20px; text-align: center; border: 1px solid #c4cadc; }
.card.second h2 { border-left: 0; }
.chart { display: flex; gap: 12px; padding: 7px 0 0 35px; }
.second .chart { padding-left: 40px; }
.low .chart { padding-top: 13px; }
.pie { width: 180px; height: 180px; margin-top: 38px; }
.legend { font-family: "DejaVu Sans", "Noto Sans CJK SC", sans-serif; }
.legend li { height: 20px; display: flex; align-items: center; gap: 8px; line-height: 20px; white-space: nowrap; }
.legend li::before { content: ""; width: 12px; height: 12px; background: currentColor; }
.legend .k1::before { background: #f0f; }
.legend .k2::before { background: #00f; }
.legend .k3::before { background: #400080; }
.legend .k4::before { background: #ff80c0; }
.legend .k5::before { background: #f00; }
.legend .k6::before { background: #0080ff; }
.legend .k7::before { background: #ff8040; }
.legend .k8::before { background: #ffff80; }
.legend .k9::before { background: #80ff80; }
.legend .k10::before { background: #00ff80; }
.legend .k11::before { background: #80ffff; }
.legend .k12::before { background: #8080c0; }
.legend .k13::before { background: #0f0; }

.stats { width: 100%; table-layout: fixed; border-collapse: collapse; line-height: 18px; }
.c1 { width: 68px; }
.c2 { width: 155px; }
.c3 { width: 55px; }
.stats thead tr { border: 1px solid #c4cadc; }
.stats th { height: 22px; padding: 0; line-height: 18px; white-space: nowrap; background: linear-gradient(#fafafa, #e8eef2); }
.stats th:first-child { padding-left: 12px; }
.stats th:nth-child(n+3) { text-align: left; }
.stats small { font-size: 12px; }
.stats td { height: 21px; padding: 0 2px; text-align: right; border: 1px solid #c4cadc; }
.stats td:first-child { text-align: left; padding-left: 4px; color: #00f; }
.stats tbody tr:nth-child(even) { background: #f7f7f7; }

/* status bar */
.status { flex: none; height: 24px; display: flex; align-items: center; padding: 1px 0 0 2px; border-top: 1px solid #8c897c; background: linear-gradient(#fff 0, #ece9d8 3px); }
.grow { flex: 1; }
.cell { width: 24px; height: 18px; border-left: 1px solid #c9c5b2; padding-left: 5px; }
.zone { width: 162px; display: flex; align-items: center; gap: 4px; padding-left: 4px; border-left: 1px solid #c9c5b2; }

/* taskbar */
.taskbar { flex: none; height: 34px; display: flex; align-items: stretch; color: #fff; background: linear-gradient(#1c50b4 0, #4a90f0 3px, #2a64dc 7px, #245edb 26px, #1a48b0 100%); }
.start { width: 97px; margin-top: 4px; padding-left: 10px; gap: 6px; font-size: 19px; font-style: italic; background: linear-gradient(#6cb86a, #3a9338 6px, #3a9a3a 22px, #2a7228); border-radius: 0 8px 12px 0; text-shadow: 1px 1px 1px #1c4a1c; }
.start svg { width: 20px; height: 18px; }
.quick { width: 122px; display: flex; align-items: center; gap: 8px; padding: 4px 6px 0 8px; }
.grip { width: 5px; height: 20px; background: radial-gradient(circle, #153c98 1px, transparent 2px) 0 0 / 5px 5px; }
.more { align-self: flex-start; margin-left: 4px; font-size: 14px; color: #bcd6ff; }
.task { flex: 0 1 159px; margin: 7px 1px 2px 0; padding-left: 10px; gap: 4px; border-radius: 3px; background: linear-gradient(#5a9cf8, #3c80f0 5px, #3a78ec); white-space: nowrap; }
.task.active { background: #1c4ab0; box-shadow: inset 1px 1px 2px #0c2c78; }
.redact-task { width: 100px; height: 12px; margin-left: -24px; }
.lang { margin-left: auto; width: 78px; display: flex; align-items: center; gap: 7px; padding: 4px 0 0 4px; }
.tray { width: 112px; display: flex; align-items: center; gap: 3px; padding: 4px 0 0 15px; background: linear-gradient(#1468c8 0, #20b0f4 4px, #1090e8 10px, #1090e8 26px, #0c6cc0); border-left: 1px solid #0c3c90; }
.tray time { margin-left: auto; padding-right: 13px; }
```
